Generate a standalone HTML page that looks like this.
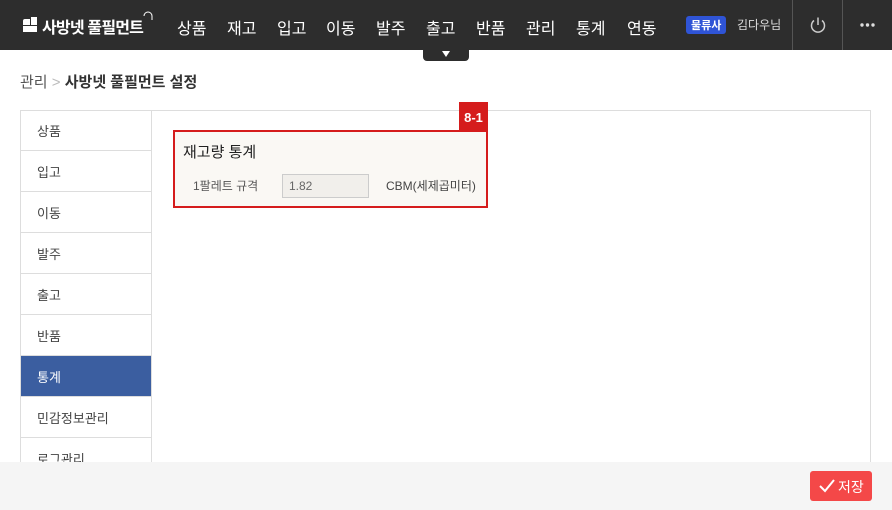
<!DOCTYPE html>
<html><head><meta charset="utf-8"><style>
*{margin:0;padding:0;box-sizing:border-box}
body{width:892px;height:510px;overflow:hidden;background:#fff;font-family:"Liberation Sans","Noto Sans CJK KR",sans-serif;position:relative}
.hd{position:absolute;left:0;top:0;width:892px;height:50px;background:#2d2d2d;color:#fff}
.logo{position:absolute;left:42px;top:14px;font-size:16px;font-weight:bold;letter-spacing:-0.8px}
.nav span{position:absolute;top:15px;font-size:16px;color:#fff}
.badge{position:absolute;left:686px;top:16px;background:#2f54d6;color:#fff;font-size:11px;font-weight:bold;padding:1px 5px;border-radius:3px}
.user{position:absolute;left:737px;top:16px;font-size:12px;color:#ddd}
.vl{position:absolute;top:0;width:1px;height:50px;background:#555}
.tab{position:absolute;left:423px;top:50px;width:46px;height:11px;background:#2d2d2d;border-radius:0 0 4px 4px}
.tab:after{content:"";position:absolute;left:19px;top:1px;border-left:4px solid transparent;border-right:4px solid transparent;border-top:6px solid #fff}
.bc{position:absolute;left:20px;top:71px;font-size:15px;color:#555}
.bc b{color:#333}
.panel{position:absolute;left:20px;top:110px;width:851px;height:400px;border:1px solid #ddd}
.side{position:absolute;left:20px;top:110px;width:132px;height:400px;border-right:1px solid #ddd;border-left:1px solid #ddd}
.side div{height:41px;border-bottom:1px solid #ddd;padding:11px 0 0 16px;font-size:13px;color:#444}
.side div.on{background:#3b5ea0;color:#fff}
.box{position:absolute;left:173px;top:130px;width:315px;height:78px;background:#faf8f4;border:2px solid #d51c1c}
.tag{position:absolute;left:459px;top:102px;width:29px;height:29px;background:#d51c1c;color:#fff;font-size:13px;font-weight:bold;text-align:center;line-height:31px}
.t1{position:absolute;left:8px;top:9px;font-size:15px;color:#222}
.l1{position:absolute;left:18px;top:45px;font-size:12px;color:#555}
.in{position:absolute;left:107px;top:42px;width:87px;height:24px;border:1px solid #ccc;background:#f1efeb;font-size:12px;color:#666;padding:4px 0 0 6px}
.u{position:absolute;left:211px;top:45px;font-size:12px;color:#444}
.foot{position:absolute;left:0;top:462px;width:892px;height:48px;background:#f5f5f5}
.save{position:absolute;left:810px;top:471px;width:62px;height:30px;background:#f44848;border-radius:3px;color:#fff;font-size:14px;padding:6px 0 0 28px}
</style></head><body>
<div class="hd">
<div style="position:absolute;left:23px;top:19px;width:7px;height:6px;background:#fff;border-radius:2px 0 0 0"></div>
<div style="position:absolute;left:31px;top:17px;width:6px;height:8px;background:#fff"></div>
<div style="position:absolute;left:23px;top:26px;width:14px;height:6px;background:#fff"></div>
<div class="logo">사방넷 풀필먼트</div>
<svg style="position:absolute;left:143px;top:11px" width="10" height="10"><path d="M1 5A4 4 0 0 1 9 5V9" fill="none" stroke="#fff" stroke-width="1"/></svg>
<div class="nav"><span style="left:177px">상품</span><span style="left:227px">재고</span><span style="left:277px">입고</span><span style="left:326px">이동</span><span style="left:376px">발주</span><span style="left:426px">출고</span><span style="left:476px">반품</span><span style="left:526px">관리</span><span style="left:576px">통계</span><span style="left:627px">연동</span></div>
<div class="badge">물류사</div><div class="user">김다우님</div>
<div class="vl" style="left:792px"></div><div class="vl" style="left:842px"></div>
<svg style="position:absolute;left:809px;top:16px" width="18" height="18" viewBox="0 0 18 18"><path d="M5 4.5A6.5 6.5 0 1 0 13 4.5" fill="none" stroke="#ccc" stroke-width="1.5"/><path d="M9 1.5V9" stroke="#ccc" stroke-width="1.5"/></svg>
<svg style="position:absolute;left:860px;top:23px" width="16" height="4"><circle cx="2" cy="2" r="1.7" fill="#ddd"/><circle cx="7.5" cy="2" r="1.7" fill="#ddd"/><circle cx="13" cy="2" r="1.7" fill="#ddd"/></svg>
</div>
<div class="tab"></div>
<div class="bc">관리 <span style="color:#bbb">&gt;</span> <b>사방넷 풀필먼트 설정</b></div>
<div class="panel"></div>
<div class="side"><div>상품</div><div>입고</div><div>이동</div><div>발주</div><div>출고</div><div>반품</div><div class="on">통계</div><div>민감정보관리</div><div>로그관리</div></div>
<div class="tag">8-1</div>
<div class="box"><div class="t1">재고량 통계</div><div class="l1">1팔레트 규격</div><div class="in">1.82</div><div class="u">CBM(세제곱미터)</div></div>
<div class="foot"></div>
<div class="save"><svg style="position:absolute;left:9px;top:8px" width="16" height="14"><path d="M1 7l5 5L15 1" fill="none" stroke="#fff" stroke-width="2"/></svg>저장</div>
</body></html>
